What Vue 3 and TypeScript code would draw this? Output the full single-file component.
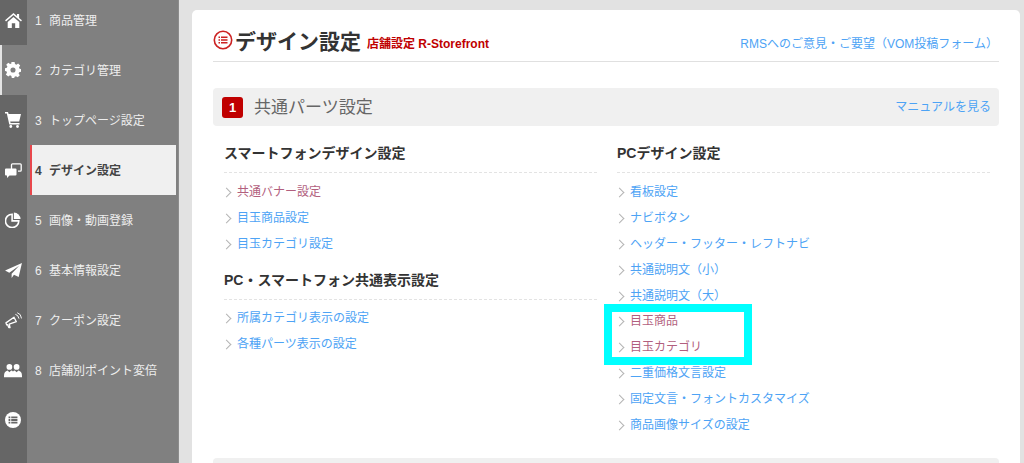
<script setup lang="ts">
const nav = ['商品管理', 'カテゴリ管理', 'トップページ設定', 'デザイン設定', '画像・動画登録', '基本情報設定', 'クーポン設定', '店舗別ポイント変倍']
const smart = [{ t: '共通バナー設定', v: true }, { t: '目玉商品設定' }, { t: '目玉カテゴリ設定' }]
const shared = [{ t: '所属カテゴリ表示の設定' }, { t: '各種パーツ表示の設定' }]
const pc = [
  { t: '看板設定' }, { t: 'ナビボタン' }, { t: 'ヘッダー・フッター・レフトナビ' }, { t: '共通説明文（小）' }, { t: '共通説明文（大）' },
  { t: '目玉商品', v: true }, { t: '目玉カテゴリ', v: true }, { t: '二重価格文言設定' }, { t: '固定文言・フォントカスタマイズ' }, { t: '商品画像サイズの設定' },
]
</script>

<template>
  <div class="page">
    <aside class="side">
      <div class="rail">
        <div class="ri first dark">
          <svg viewBox="0 0 18 16" width="17" height="15"><path d="M9 0 0 7.800l1 1.200L9 2.200 17 9l1-1.200-3-2.600V1h-2.300v2.200z" fill="#fff"/><path d="M2.800 9.500 9 4.200l6.200 5.300V16H10.800V11H7.200V16H2.800z" fill="#fff"/></svg>
        </div>
        <div class="ri on">
          <svg viewBox="0 0 20 20" width="16" height="16"><path fill-rule="evenodd" d="M8 0h4l.5 2.600 1.700.7L16.400 1.800 19 4.400l-1.500 2.200.7 1.700L20 8.800v3.400l-2.300.5-.7 1.700 1.500 2.200-2.600 2.600-2.200-1.500-1.700.7L11.500 20h-3l-.5-2.600-1.700-.7-2.200 1.500L1 15.600l1.500-2.200-.7-1.700L0 11.200V7.800l2.300-.5.700-1.700L1.500 3.400 4.100 1 6.300 2.500 8 1.800zM10 6.800a3.200 3.200 0 1 0 0 6.400 3.200 3.200 0 0 0 0-6.400z" fill="#fff"/></svg>
        </div>
        <div class="ri dark">
          <svg viewBox="0 0 16 16" width="16" height="16"><path d="M0 0h3l.6 2H16l-1.800 7.500H5.200l.4 1.500H14.500v1.500H4.300L1.800 1.500H0z" fill="#fff"/><circle cx="5.800" cy="14.500" r="1.400" fill="#fff"/><circle cx="12.500" cy="14.500" r="1.400" fill="#fff"/></svg>
        </div>
        <div class="ri dark">
          <svg viewBox="0 0 17 15" width="17" height="15"><path d="M6.500 6V1.800Q6.500 .8 7.500 .8h7.700Q16.200 .8 16.200 1.800v5.400Q16.200 8.200 15.200 8.200H13" fill="none" stroke="#fff" stroke-width="1.300"/><path d="M1 5.500h9.500Q11.500 5.500 11.500 6.500v5Q11.500 12.500 10.500 12.500H4.500L2 15v-2.500H1Q0 12.500 0 11.500v-5Q0 5.500 1 5.500z" fill="#fff"/></svg>
        </div>
        <div class="ri dark">
          <svg viewBox="0 0 18 18" width="16" height="16"><path d="M8 2.500v7.500h7.500A7.500 7.500 0 1 1 8 2.500z" fill="none" stroke="#fff" stroke-width="1.800"/><path d="M10 .5a7.700 7.700 0 0 1 7.500 7.500H10z" fill="#fff"/></svg>
        </div>
        <div class="ri dark">
          <svg viewBox="0 0 18 16" width="17" height="15"><path d="M18 0 14.500 15 9.500 12.500 7 16V11.500L15 3 4.500 10.500 0 8z" fill="#fff"/></svg>
        </div>
        <div class="ri dark">
          <svg viewBox="0 0 18 18" width="17" height="17"><path d="M1 11.500 9.500 5.500l2.500 4.800-7.500 2.500.8 3.700H4l-1.200-3-1 .2z" fill="none" stroke="#fff" stroke-width="1.400" stroke-linejoin="round"/><path d="M11 2.500q3 .5 3.800 4.500M13 .8q4 1 4.500 6" fill="none" stroke="#fff" stroke-width="1"/></svg>
        </div>
        <div class="ri dark">
          <svg viewBox="0 0 20 16" width="18" height="15"><circle cx="6" cy="4" r="3.200" fill="#fff"/><circle cx="14" cy="4" r="3.200" fill="#fff"/><path d="M0 14q0-5 4-6l2 2 2-2q2 .3 2 1.500 0-1.200 2-1.500l2 2 2-2q4 1 4 6v1.500H0z" fill="#fff"/></svg>
        </div>
        <div class="ri dark">
          <svg viewBox="0 0 18 18" width="16" height="16"><circle cx="9" cy="9" r="9" fill="#fff"/><path d="M4 5h2v2H4zM7 5h7v2H7zM4 8h2v2H4zM7 8h7v2H7zM4 11h2v2H4zM7 11h7v2H7z" fill="#666"/></svg>
        </div>
        <div class="ri dark fill"></div>
      </div>
      <nav class="menu">
        <div v-for="(n, i) in nav" :key="n" class="mi" :class="{ cur: i === 3 }">
          <span class="num">{{ i + 1 }}</span><span>{{ n }}</span>
        </div>
      </nav>
    </aside>
    <main class="wrap">
      <section class="card">
        <header class="top">
          <svg class="ticon" viewBox="0 0 20 20" width="20" height="20"><circle cx="10" cy="10" r="8.700" fill="none" stroke="#c22" stroke-width="1.600"/><path d="M5.500 6.500h1.500v1.500H5.500zM8 6.500h6.500v1.500H8zM5.500 9.300h1.500v1.500H5.500zM8 9.300h6.500v1.500H8zM5.500 12h1.500v1.500H5.500zM8 12h6.500v1.500H8z" fill="#c22"/></svg>
          <h1>デザイン設定</h1>
          <span class="tag">店舗設定 R-Storefront</span>
          <a class="lnk vom">RMSへのご意見・ご要望（VOM投稿フォーム）</a>
        </header>
        <div class="bar">
          <span class="badge">1</span>
          <h2>共通パーツ設定</h2>
          <a class="lnk man">マニュアルを見る</a>
        </div>
        <div class="cols">
          <div class="col">
            <h3>スマートフォンデザイン設定</h3>
            <ul>
              <li v-for="l in smart" :key="l.t" :class="{ vis: l.v }">{{ l.t }}</li>
            </ul>
            <h3 class="second">PC・スマートフォン共通表示設定</h3>
            <ul class="tight">
              <li v-for="l in shared" :key="l.t">{{ l.t }}</li>
            </ul>
          </div>
          <div class="col">
            <h3>PCデザイン設定</h3>
            <ul>
              <li v-for="l in pc" :key="l.t" :class="{ vis: l.v }">{{ l.t }}</li>
            </ul>
            <div class="mark"></div>
          </div>
        </div>
        <div class="bar next"></div>
      </section>
    </main>
  </div>
</template>

<style>
html, body { margin: 0; overflow: hidden; }
</style>

<style scoped>
.page { width: 1024px; height: 463px; display: flex; overflow: hidden; background: #e2e2e2; font-family: "Liberation Sans", "Noto Sans CJK JP", sans-serif; }
.side { width: 178px; flex: none; display: flex; background: #808080; border-right: 1px solid #8c8c8c; box-sizing: content-box; }
.rail { width: 27px; flex: none; display: flex; flex-direction: column; }
.ri { height: 50px; flex: none; display: flex; align-items: center; justify-content: center; box-sizing: border-box; padding-right: 1px; }
.ri.first { height: 45px; padding-bottom: 5px; }
.ri.dark { background: #666; }
.ri.on { background: #808080; border-left: 2px solid #e4e4e4; padding-right: 3px; }
.ri.fill { flex: 1; height: auto; }
.menu { flex: 1; padding-left: 3px; padding-right: 2px; margin-top: -5px; display: flex; flex-direction: column; }
.mi { height: 50px; flex: none; line-height: 48px; padding: 2px 0 0 5px; box-sizing: border-box; font-size: 12px; color: #eee; }
.num { display: inline-block; width: 14px; }
.mi.cur { background: #f0f0f0; color: #444; border-left: 2px solid #e8474c; padding-left: 3px; font-weight: bold; }
.wrap { flex: 1; padding: 10px 4px 0 13px; min-width: 0; }
.card { background: #fff; border-radius: 5px 5px 0 0; height: 470px; padding: 0 21px; box-sizing: border-box; position: relative; }
.top { height: 52px; box-sizing: border-box; display: flex; align-items: flex-end; border-bottom: 1px solid #e0e0e0; padding-bottom: 8px; }
.ticon { margin-bottom: 3px; flex: none; }
h1 { margin: 0 0 -2px 2px; font-size: 21px; line-height: 26px; font-weight: bold; color: #333; }
.tag { font-size: 12px; font-weight: bold; color: #c00000; margin-left: 6px; line-height: 18px; }
.lnk { color: #4da3f5; font-size: 12px; }
.vom { margin-left: auto; margin-right: 1px; line-height: 18px; }
.bar { margin-top: 26px; height: 38px; background: #f0f0f0; border-radius: 4px; display: flex; align-items: center; padding: 0 8px 0 9px; }
.badge { width: 21px; height: 21px; border-radius: 3px; background: #c00000; color: #fff; font-size: 13px; font-weight: bold; display: flex; align-items: center; justify-content: center; }
h2 { margin: 0 0 4px 11px; font-size: 17px; font-weight: normal; color: #666; }
.man { margin-left: auto; margin-bottom: 4px; }
.cols { display: flex; justify-content: space-between; padding: 0 9px 0 11px; height: 332px; }
.col { width: 373px; position: relative; }
h3 { margin: 0; padding: 18px 0 10px; height: 47px; line-height: 19px; box-sizing: border-box; border-bottom: 1px dashed #e3e3e3; font-size: 14px; font-weight: bold; color: #333; }
h3.second { margin-top: -2px; padding-top: 15px; height: 44px; }
ul { margin: 0; padding: 7px 0 0; list-style: none; }
ul.tight { padding-top: 6px; }
li { height: 25.900px; line-height: 25.900px; font-size: 12px; color: #4da3f5; padding-left: 13px; position: relative; }
li::before { content: ""; position: absolute; left: -1px; top: 9px; width: 6px; height: 6px; border-top: 1px solid #b4b4b4; border-right: 1px solid #b4b4b4; transform: rotate(45deg); }
li.vis { color: #b25f7e; }
.mark { position: absolute; left: -13px; top: 178px; width: 132px; height: 45px; border: 8px solid #00ffff; pointer-events: none; }
.bar.next { margin: 0; height: 20px; }
</style>
